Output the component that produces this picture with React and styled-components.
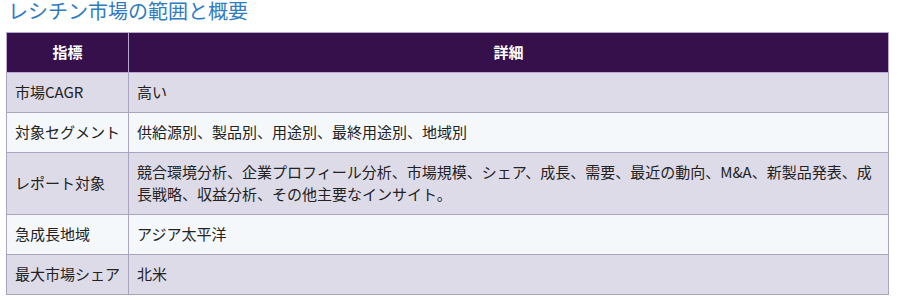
import React from "react";
import styled, { createGlobalStyle } from "styled-components";

const GlobalStyle = createGlobalStyle`
  body {
    margin: 0;
    background: #ffffff;
    font-family: "Noto Sans CJK JP", "Noto Sans", sans-serif;
  }
`;

const Page = styled.div`
  padding: 0 12px 0 6px;
  width: 901px;
  box-sizing: border-box;
`;

const Title = styled.h2`
  margin: 0 0 10px 2px;
  font-size: 20px;
  line-height: 22px;
  font-weight: 400;
  color: #2f7cc0;
`;

const Table = styled.table`
  width: 883px;
  border-collapse: collapse;
  border: 1px solid #aaa4c2;
  font-size: 15px;
  line-height: 22px;
  color: #222222;
`;

const HeadCell = styled.th`
  background: #36104a;
  color: #ffffff;
  font-weight: 700;
  text-align: center;
  padding: 8px 8px 9px;
  border: 1px solid #b8a8d2;
  width: ${(p) => (p.$narrow ? "105px" : "auto")};
`;

const Row = styled.tr`
  background: ${(p) => (p.$alt ? "#f4f8fb" : "#dedbe9")};
`;

const Cell = styled.td`
  padding: 8px 8px 9px;
  border: 1px solid #aaa4c2;
  vertical-align: middle;
  white-space: ${(p) => (p.$label ? "nowrap" : "normal")};
`;

const rows = [
  ["市場CAGR", "高い"],
  ["対象セグメント", "供給源別、製品別、用途別、最終用途別、地域別"],
  [
    "レポート対象",
    "競合環境分析、企業プロフィール分析、市場規模、シェア、成長、需要、最近の動向、M&A、新製品発表、成長戦略、収益分析、その他主要なインサイト。",
  ],
  ["急成長地域", "アジア太平洋"],
  ["最大市場シェア", "北米"],
];

export default function App() {
  return (
    <Page>
      <GlobalStyle />
      <Title>レシチン市場の範囲と概要</Title>
      <Table>
        <thead>
          <tr>
            <HeadCell $narrow>指標</HeadCell>
            <HeadCell>詳細</HeadCell>
          </tr>
        </thead>
        <tbody>
          {rows.map(([label, detail], i) => (
            <Row key={label} $alt={i % 2 === 1}>
              <Cell $label>{label}</Cell>
              <Cell>{detail}</Cell>
            </Row>
          ))}
        </tbody>
      </Table>
    </Page>
  );
}
